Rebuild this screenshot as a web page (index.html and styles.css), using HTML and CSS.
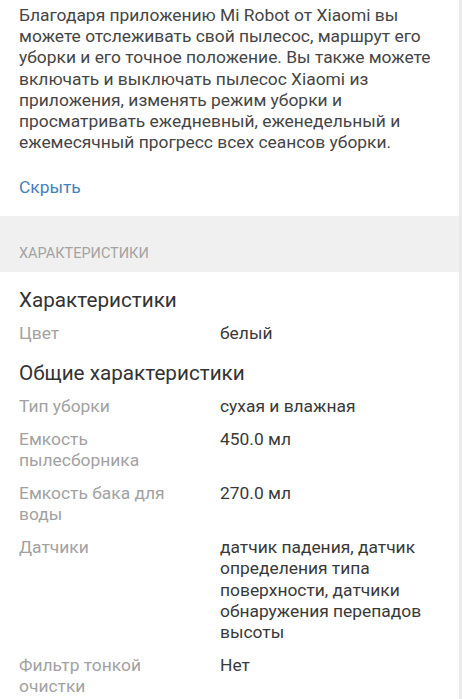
FILE: index.html
```html
<!DOCTYPE html>
<html lang="ru">
<head>
<meta charset="utf-8">
<title>Характеристики</title>
<link rel="stylesheet" href="styles.css">
</head>
<body>
<div class="page">
  <section class="about">
    <p class="desc">Благодаря приложению Mi Robot от Xiaomi вы можете отслеживать свой пылесос, маршрут его уборки и его точное положение. Вы также можете включать и выключать пылесос Xiaomi из приложения, изменять режим уборки и просматривать ежедневный, еженедельный и ежемесячный прогресс всех сеансов уборки.</p>
    <a class="toggle">Скрыть</a>
  </section>
  <div class="band">ХАРАКТЕРИСТИКИ</div>
  <section class="specs">
    <div class="group">
      <h2 class="group-title">Характеристики</h2>
      <dl class="rows">
        <dt>Цвет</dt><dd>белый</dd>
      </dl>
    </div>
    <div class="group">
      <h2 class="group-title">Общие характеристики</h2>
      <dl class="rows">
        <dt>Тип уборки</dt><dd>сухая и влажная</dd>
        <dt>Емкость пылесборника</dt><dd>450.0 мл</dd>
        <dt>Емкость бака для воды</dt><dd>270.0 мл</dd>
        <dt>Датчики</dt><dd>датчик падения, датчик определения типа поверхности, датчики обнаружения перепадов высоты</dd>
        <dt>Фильтр тонкой очистки</dt><dd>Нет</dd>
      </dl>
    </div>
  </section>
</div>
</body>
</html>
```

FILE: styles.css
```css
html, body {
  margin: 0;
  padding: 0;
  background: #ffffff;
}
body {
  font-family: Roboto, "Noto Sans", "Liberation Sans", sans-serif;
  font-size: 17.4px;
  line-height: 21.2px;
  color: #444444;
  overflow: hidden;
}
.page {
  border-right: 3px solid #ebebeb;
  min-height: 699px;
  box-sizing: border-box;
}
.about {
  padding: 5px 19px 0 19px;
}
.desc {
  margin: 0;
  color: #454545;
}
.toggle {
  display: block;
  margin-top: 24px;
  padding-bottom: 17.4px;
  color: #4380bd;
  text-decoration: none;
}
.band {
  background: #f0f0f0;
  height: 56px;
  box-sizing: border-box;
  padding: 29px 19px 9px 19px;
  font-size: 14.5px;
  line-height: 18px;
  color: #a3a3a3;
}
.specs {
  padding: 15px 19px 0 19px;
  display: flex;
  flex-direction: column;
  gap: 15.4px;
}
.group-title {
  margin: 0 0 10.4px 0;
  font-size: 20.7px;
  line-height: 26px;
  font-weight: 400;
  color: #333333;
}
.rows {
  margin: 0;
  display: grid;
  grid-template-columns: 178px 1fr;
  column-gap: 23px;
  row-gap: 11.6px;
}
.rows dt {
  color: #a2a2a2;
}
.rows dd {
  margin: 0;
  color: #393939;
}
```
